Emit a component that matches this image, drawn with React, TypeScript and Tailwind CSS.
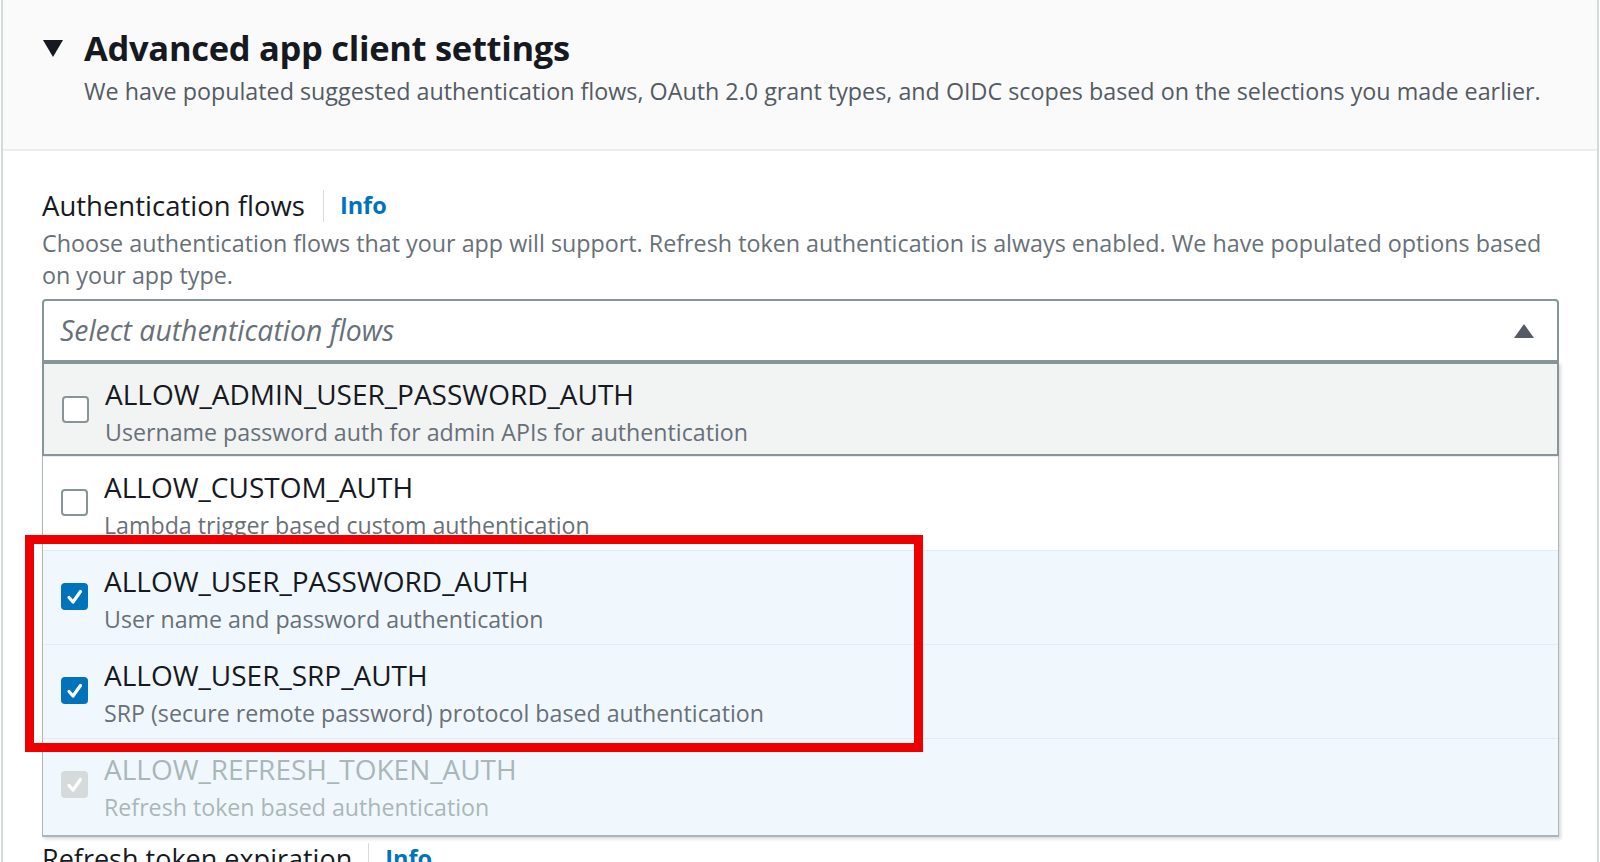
import React from "react";

type Item = { title: string; desc: string; checked: boolean; disabled?: boolean; bg: string; hover?: boolean; h: string };

const items: Item[] = [
  { title: "ALLOW_ADMIN_USER_PASSWORD_AUTH", desc: "Username password auth for admin APIs for authentication", checked: false, bg: "bg-[#f2f3f3]", hover: true, h: "h-[94px]" },
  { title: "ALLOW_CUSTOM_AUTH", desc: "Lambda trigger based custom authentication", checked: false, bg: "bg-white", h: "h-[94px]" },
  { title: "ALLOW_USER_PASSWORD_AUTH", desc: "User name and password authentication", checked: true, bg: "bg-[#f1f8fd]", h: "h-[94px]" },
  { title: "ALLOW_USER_SRP_AUTH", desc: "SRP (secure remote password) protocol based authentication", checked: true, bg: "bg-[#f1f8fd]", h: "h-[94px]" },
  { title: "ALLOW_REFRESH_TOKEN_AUTH", desc: "Refresh token based authentication", checked: true, disabled: true, bg: "bg-[#f1f8fd]", h: "h-[97px]" },
];

function Check({ checked, disabled }: { checked: boolean; disabled?: boolean }) {
  if (!checked) {
    return <div className="mt-[22px] w-[27px] h-[27px] rounded-[4px] border-2 border-[#879596] bg-white shrink-0" />;
  }
  return (
    <div className={`mt-[22px] w-[27px] h-[27px] rounded-[4px] shrink-0 flex items-center justify-center ${disabled ? "bg-[#d5dbdb]" : "bg-[#0073bb]"}`}>
      <svg width="20" height="20" viewBox="0 0 20 20" fill="none">
        <path d="M4 10.5 L8 15 L15.5 4.5" stroke="white" strokeWidth="3.2" strokeLinecap="round" strokeLinejoin="round" />
      </svg>
    </div>
  );
}

export default function App() {
  return (
    <div className="w-[1600px] h-[862px] overflow-hidden bg-white relative font-['Open_Sans',sans-serif]">
      <div className="ml-[1px] w-[1598px] h-full border-x-2 border-[#d5dbdb] flex flex-col">
        <div className="h-[151px] shrink-0 bg-[#fafafa] border-b-2 border-[#eaeded] pl-[39px] pt-[24px]">
          <div className="flex items-center gap-[20px]">
            <svg width="22" height="19" viewBox="0 0 22 19"><path d="M1 1 H21 L11 18 Z" fill="#16191f" /></svg>
            <h2 className="text-[34.5px] leading-[48px] font-bold text-[#16191f] tracking-[-0.3px]">Advanced app client settings</h2>
          </div>
          <p className="ml-[42px] mt-[2px] text-[23.3px] leading-[34px] text-[#545b64]">
            We have populated suggested authentication flows, OAuth 2.0 grant types, and OIDC scopes based on the selections you made earlier.
          </p>
        </div>

        <div className="pl-[39px] pr-[38px] pt-[35px]">
          <div className="flex items-center h-[40px]">
            <span className="text-[27.5px] text-[#16191f]">Authentication flows</span>
            <span className="ml-[18px] mr-[16px] w-px h-[32px] bg-[#d5dbdb]" />
            <span className="text-[23.5px] font-bold text-[#0073bb]">Info</span>
          </div>
          <p className="mt-[1px] text-[23.3px] leading-[32px] text-[#687078]">
            Choose authentication flows that your app will support. Refresh token authentication is always enabled. We have populated options based on your app type.
          </p>
          <div className="mt-[8px] h-[63px] border-2 border-[#879596] rounded-t-[4px] flex items-center justify-between pl-[16px] pr-[22px]">
            <span className="italic text-[28.4px] text-[#687078]">Select authentication flows</span>
            <svg width="22" height="16" viewBox="0 0 22 16"><path d="M11 1 L21 15 H1 Z" fill="#545b64" /></svg>
          </div>
          <div className="border-x border-b-2 border-[#aab7b8] shadow-[2px_2px_3px_rgba(0,0,0,0.15)]">
            {items.map((it, i) => (
              <div
                key={i}
                className={`${it.h} flex items-start gap-[16px] pl-[18px] pt-[10px] ${it.bg} ${it.hover ? "border-2 border-[#879596] -mx-px" : i > 1 ? "border-t border-[#e1ecf4]" : "border-t border-[#eaeded]"}`}
              >
                <Check checked={it.checked} disabled={it.disabled} />
                <div className="flex flex-col">
                  <span className={`text-[28px] leading-[40px] ${it.disabled ? "text-[#aab7b8]" : "text-[#16191f]"}`}>{it.title}</span>
                  <span className={`text-[23.2px] leading-[36px] ${it.disabled ? "text-[#aab7b8]" : "text-[#687078]"}`}>{it.desc}</span>
                </div>
              </div>
            ))}
          </div>
          <div className="flex items-center h-[40px] mt-[2px]">
            <span className="text-[27px] text-[#16191f]">Refresh token expiration</span>
            <span className="ml-[16px] mr-[16px] w-px h-[32px] bg-[#d5dbdb]" />
            <span className="text-[23.5px] font-bold text-[#0073bb]">Info</span>
          </div>
        </div>
      </div>
      <div className="absolute left-[25px] top-[535px] w-[898px] h-[217px] border-[9px] border-[#ee0000]" />
    </div>
  );
}
